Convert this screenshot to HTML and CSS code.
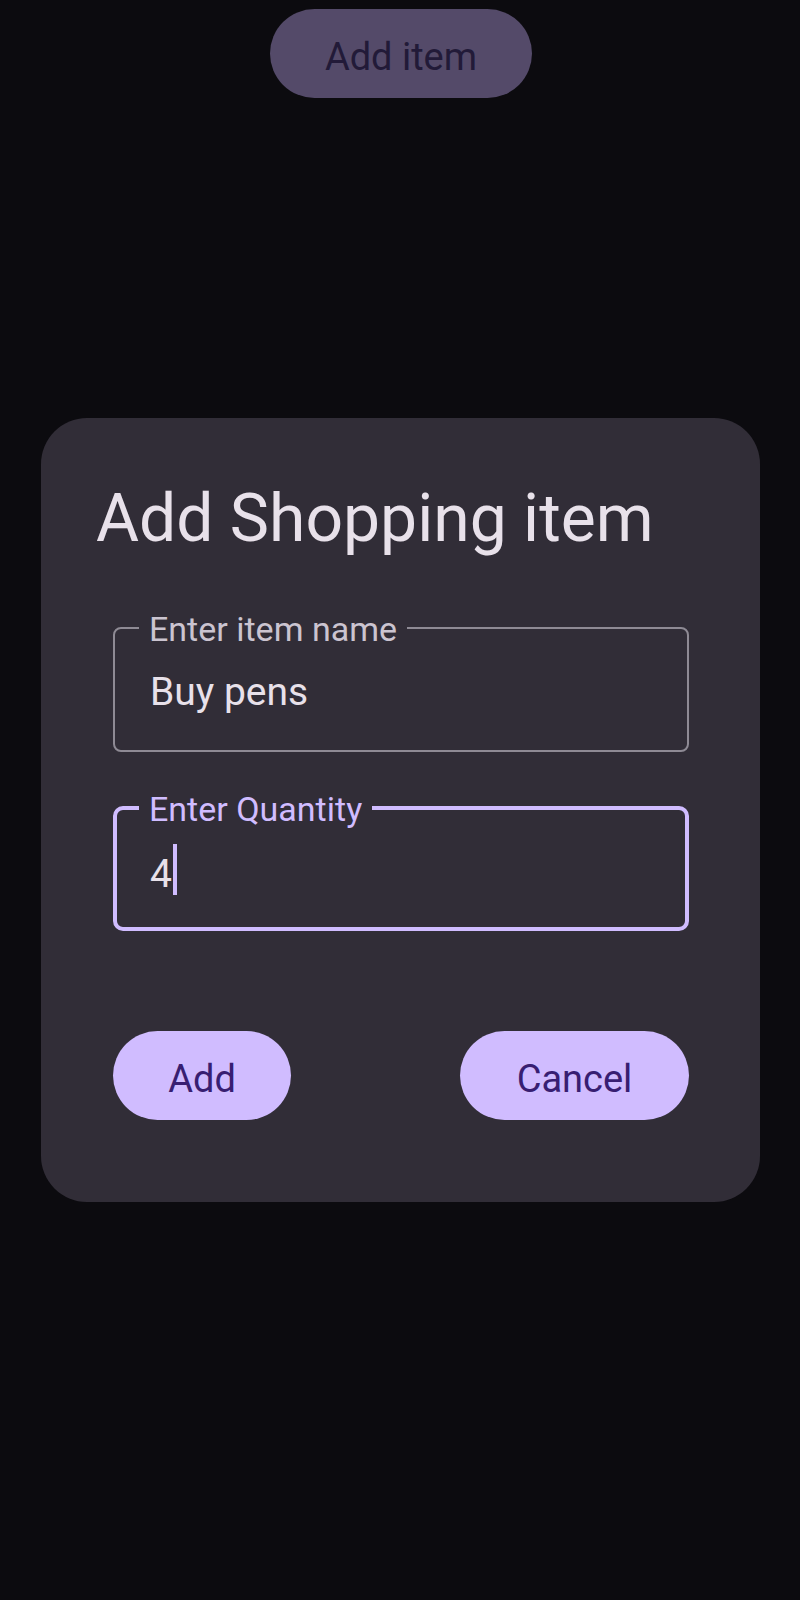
FILE: index.html
```html
<!DOCTYPE html>
<html lang="en">
<head>
<meta charset="utf-8">
<title>Add Shopping item</title>
<link rel="stylesheet" href="styles.css">
</head>
<body>
<div class="screen">
  <button class="top-btn">Add item</button>
  <div class="dialog">
    <h1 class="title">Add Shopping item</h1>
    <div class="form">
      <div class="field">
        <span class="label">Enter item name</span>
        <div class="value">Buy pens</div>
      </div>
      <div class="field focused">
        <span class="label">Enter Quantity</span>
        <div class="value num">4<span class="cursor"></span></div>
      </div>
      <div class="actions">
        <button class="btn btn-add">Add</button>
        <button class="btn btn-cancel">Cancel</button>
      </div>
    </div>
  </div>
</div>
</body>
</html>
```
FILE: styles.css
```css
html, body {
  margin: 0;
  padding: 0;
  background: #0c0b0f;
}
body {
  width: 800px;
  height: 1600px;
  font-family: Roboto, "Noto Sans", sans-serif;
}
.screen {
  display: flex;
  flex-direction: column;
  align-items: center;
}
.top-btn {
  margin-top: 9px;
  width: 262px;
  height: 89px;
  border: none;
  border-radius: 45px;
  background: #544a69;
  color: #221a38;
  font-family: Roboto, sans-serif;
  font-size: 38px;
  padding: 6px 0 0 0;
  margin-left: 2px;
}
.dialog {
  box-sizing: border-box;
  margin-top: 320px;
  width: 719px;
  height: 784px;
  margin-left: 1px;
  background: #312d37;
  border-radius: 46px;
  padding: 63px 71px 0 55px;
}
.title {
  margin: 0;
  font-weight: 400;
  font-size: 66px;
  line-height: 76px;
  color: #e8e1ea;
  letter-spacing: 0;
}
.form {
  margin-left: 17px;
  margin-top: 70px;
  display: flex;
  flex-direction: column;
}
.field {
  position: relative;
  box-sizing: border-box;
  height: 125px;
  border: 2px solid #8e8a94;
  border-radius: 8px;
  padding: 40px 0 0 35px;
}
.field + .field {
  margin-top: 54px;
}
.label {
  position: absolute;
  left: 24px;
  top: -20px;
  padding: 0 10px;
  background: #312d37;
  color: #cbc4d0;
  font-size: 34px;
  line-height: 40px;
}
.value {
  color: #e8e1ea;
  font-size: 39px;
  line-height: 46px;
}
.field.focused {
  border: 4px solid #d0bcff;
  border-radius: 10px;
  padding: 34px 0 0 33px;
}
.field.focused .label {
  left: 22px;
  top: -21px;
  color: #d0bcff;
}
.value.num {
  line-height: 60px;
}
.cursor {
  display: inline-block;
  width: 4px;
  height: 51px;
  margin-left: 1px;
  vertical-align: -8px;
  background: #d0bcff;
}
.actions {
  display: flex;
  justify-content: space-between;
  margin-top: 100px;
}
.btn {
  height: 89px;
  border: none;
  border-radius: 45px;
  background: #d0bcff;
  color: #381e72;
  font-family: Roboto, sans-serif;
  font-size: 38px;
  padding: 6px 0 0 0;
}
.btn-add {
  width: 178px;
}
.btn-cancel {
  width: 229px;
}
```
